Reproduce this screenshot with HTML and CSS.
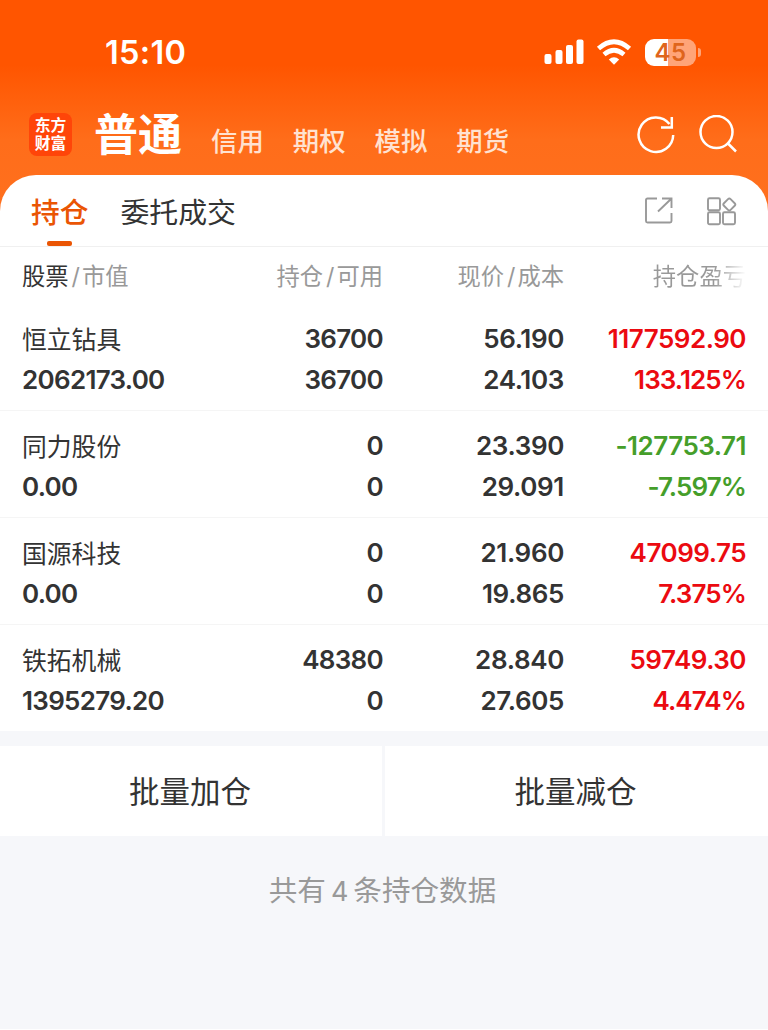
FILE: index.html
```html
<!DOCTYPE html>
<html lang="zh-CN">
<head>
<meta charset="utf-8">
<title>持仓</title>
<link rel="stylesheet" href="styles.css">
</head>
<body>
<div class="screen">
  <header class="top">
    <div class="status">
      <div class="clock">15:10</div>
      <div class="indicators">
        <svg class="signal" width="40" height="26" viewBox="0 0 40 26" fill="#fff">
          <rect x="0.500" y="15" width="7" height="10" rx="2"/>
          <rect x="11.500" y="11" width="7" height="14" rx="2"/>
          <rect x="22" y="6" width="7" height="19" rx="2"/>
          <rect x="32.500" y="0.500" width="7" height="24.500" rx="2"/>
        </svg>
        <svg class="wifi" width="36" height="26" viewBox="0 0 36 26">
          <path d="M2.500 9.500Q18 -4 33.500 9.500" fill="none" stroke="#fff" stroke-width="4.800"/>
          <path d="M8 15.500Q18 7 28 15.500" fill="none" stroke="#fff" stroke-width="4.600"/>
          <path d="M12.800 20.500Q18 16 23.200 20.500L18 25.700Z" fill="#fff"/>
        </svg>
        <div class="battery"><div class="cell">45</div><i class="nub"></i></div>
      </div>
    </div>
    <nav class="accounts">
      <div class="logo">东方<br>财富</div>
      <strong class="account-on">普通</strong>
      <div class="account-list"><span>信用</span><span>期权</span><span>模拟</span><span>期货</span></div>
      <div class="actions">
        <svg width="40" height="40" viewBox="0 0 40 40" fill="none" stroke="#fff" stroke-width="2.500">
          <path d="M36.200 20A17.300 17.300 0 1 1 32.500 9"/>
          <path d="M34.800 2V12.500H24"/>
        </svg>
        <svg width="40" height="40" viewBox="0 0 40 40" fill="none" stroke="#fff" stroke-width="2.500">
          <circle cx="17.500" cy="17" r="16"/>
          <path d="M28.500 28L37 36.500"/>
        </svg>
      </div>
    </nav>
  </header>

  <main class="panel">
    <div class="tabs">
      <div class="tab tab-on">持仓</div>
      <div class="tab">委托成交</div>
      <div class="tools">
        <svg width="30" height="30" viewBox="0 0 30 30" fill="none" stroke="#999" stroke-width="1.900">
          <path d="M12 2.500H2.500Q1 2.500 1 4V25Q1 26.500 2.500 26.500H25Q26.500 26.500 26.500 25V17"/>
          <path d="M17 2.500H26.500V12M26.500 2.500L13 15.500"/>
        </svg>
        <svg width="30" height="30" viewBox="0 0 30 30" fill="none" stroke="#999" stroke-width="1.900">
          <rect x="1" y="2.300" width="12" height="12" rx="1.500"/>
          <rect x="1" y="16.300" width="12" height="12" rx="1.500"/>
          <rect x="16" y="16.300" width="12" height="12" rx="1.500"/>
          <rect x="17.600" y="3.800" width="9.400" height="9.400" rx="1.800" transform="rotate(45 22.300 8.500)"/>
        </svg>
      </div>
    </div>
    <div class="grid head">
      <div><b>股票</b><i>/</i>市值</div>
      <div>持仓<i>/</i>可用</div>
      <div>现价<i>/</i>成本</div>
      <div class="fade">持仓盈亏</div>
    </div>
    <section class="grid row">
      <div><span class="name">恒立钻具</span><span>2062173.00</span></div>
      <div><span>36700</span><span>36700</span></div>
      <div class="price"><span>56.190</span><span>24.103</span></div>
      <div class="up"><span>1177592.90</span><span class="rate">133.125%</span></div>
    </section>
    <section class="grid row">
      <div><span class="name">同力股份</span><span>0.00</span></div>
      <div><span>0</span><span>0</span></div>
      <div class="price"><span>23.390</span><span>29.091</span></div>
      <div class="down"><span>-127753.71</span><span class="rate">-7.597%</span></div>
    </section>
    <section class="grid row">
      <div><span class="name">国源科技</span><span>0.00</span></div>
      <div><span>0</span><span>0</span></div>
      <div class="price"><span>21.960</span><span>19.865</span></div>
      <div class="up"><span>47099.75</span><span class="rate">7.375%</span></div>
    </section>
    <section class="grid row">
      <div><span class="name">铁拓机械</span><span>1395279.20</span></div>
      <div><span>48380</span><span>0</span></div>
      <div class="price"><span>28.840</span><span>27.605</span></div>
      <div class="up"><span>59749.30</span><span class="rate">4.474%</span></div>
    </section>
  </main>

  <div class="batch">
    <div class="batch-btn">批量加仓</div>
    <div class="batch-btn">批量减仓</div>
  </div>
  <footer class="summary">共有<span>4</span>条持仓数据</footer>
</div>
</body>
</html>
```
FILE: styles.css
```css
* { box-sizing: border-box; }

body {
  margin: 0;
  background: #fff;
  font-family: Inter, "Noto Sans CJK SC", sans-serif;
  color: #333;
}

i { font-style: normal; }
svg { display: block; }

.screen {
  width: 768px;
  height: 1029px;
  overflow: hidden;
  background: #f6f7fa;
}

.top {
  height: 215px;
  background: linear-gradient(#ff5500 0, #ff5500 65px, #ff6d1a 140px, #ff701e 215px);
  color: #fff;
}

.status {
  height: 100px;
  padding: 4px 67px 0 105px;
  display: flex;
  align-items: center;
  justify-content: space-between;
}

.clock {
  font-size: 32.500px;
  font-weight: 600;
  letter-spacing: 0.3px;
}

.indicators {
  display: flex;
  align-items: center;
}

.wifi { margin: 0 13px 0 12px; }

.battery {
  display: flex;
  align-items: center;
  gap: 2px;
}

.cell {
  width: 51px;
  height: 27px;
  border-radius: 9px;
  background: linear-gradient(90deg, #fff 23px, #ffa478 23px);
  color: #df651c;
  font-size: 24px;
  font-weight: 600;
  letter-spacing: 0.5px;
  line-height: 27px;
  text-align: center;
}

.nub {
  width: 3px;
  height: 9px;
  border-radius: 0 4px 4px 0;
  background: #ffa478;
}

.accounts {
  height: 75px;
  padding: 0 29px 0 29px;
  display: flex;
  align-items: flex-start;
}

.logo {
  width: 43px;
  height: 43px;
  margin-top: 13px;
  padding-top: 3px;
  border-radius: 8px;
  background: #ff4509;
  font: 700 15.800px/18px "Noto Sans CJK SC", sans-serif;
  text-align: center;
}

.account-on {
  margin: 2px 0 0 22px;
  font-size: 44px;
  font-weight: 700;
  line-height: 66px;
}

.account-list {
  margin: 21px 0 0 29px;
  display: flex;
  gap: 29px;
  font-size: 26.400px;
  font-weight: 500;
  line-height: 40px;
  color: #ffe2d1;
}

.actions {
  margin: 15px 0 0 auto;
  display: flex;
  gap: 22px;
}

.panel {
  margin-top: -40px;
  background: #fff;
  border-radius: 36px 36px 0 0;
}

.tabs {
  height: 72px;
  padding: 0 31px;
  display: flex;
  border-bottom: 1px solid #f0f0f0;
}

.tab {
  margin-right: 32px;
  font-size: 28.900px;
  line-height: 75px;
}

.tab-on {
  display: flex;
  flex-direction: column;
  align-items: center;
  font-weight: 500;
  font-size: 28.700px;
  color: #ea5504;
}

.tab-on::after {
  content: "";
  width: 25px;
  height: 5px;
  margin-top: -9px;
  border-radius: 2px;
  background: #ea5504;
}

.tools {
  margin: 21px 0 0 auto;
  display: flex;
  gap: 32px;
}

.grid {
  padding: 0 22px;
  display: grid;
  grid-template-columns: 180px 181px 181px 182px;
  text-align: right;
}

.grid > :first-child { text-align: left; }

.head {
  height: 57px;
  font-size: 23.300px;
  line-height: 60px;
  color: #999;
}

.head b {
  font-weight: 400;
  color: #333;
}

.head i { margin: 0 2px 0 3px; }

.fade {
  background: linear-gradient(90deg, #999 0, #999 150px, #fff 182px);
  background-clip: text;
  color: transparent;
}

.row {
  height: 107px;
  padding-top: 15px;
  border-bottom: 1px solid #f5f5f5;
  font-size: 26px;
  font-weight: 600;
  letter-spacing: -0.7px;
  line-height: 40.500px;
}

.row span { display: block; }

.row .name {
  height: 40.500px;
  font-size: 24.800px;
  font-weight: 400;
  letter-spacing: 0;
  line-height: 43px;
}

.row .price { letter-spacing: -0.35px; }
.row .up, .row .down { letter-spacing: -0.5px; }
.row .rate { letter-spacing: -0.9px; }

.row:last-child {
  height: 106px;
  border-bottom: 0;
}

.up { color: #eb0a10; }
.down { color: #459e2a; }

.batch {
  margin-top: 15px;
  display: grid;
  grid-template-columns: 382px 383px;
  gap: 3px;
}

.batch-btn {
  height: 90px;
  padding-right: 2px;
  background: #fff;
  font-size: 30.500px;
  line-height: 92px;
  text-align: center;
}

.summary {
  padding: 34px 3px 0 0;
  font-size: 28.600px;
  line-height: 42px;
  text-align: center;
  color: #999;
}

.summary span {
  margin: 0 5px;
  font-size: 27px;
}
```
